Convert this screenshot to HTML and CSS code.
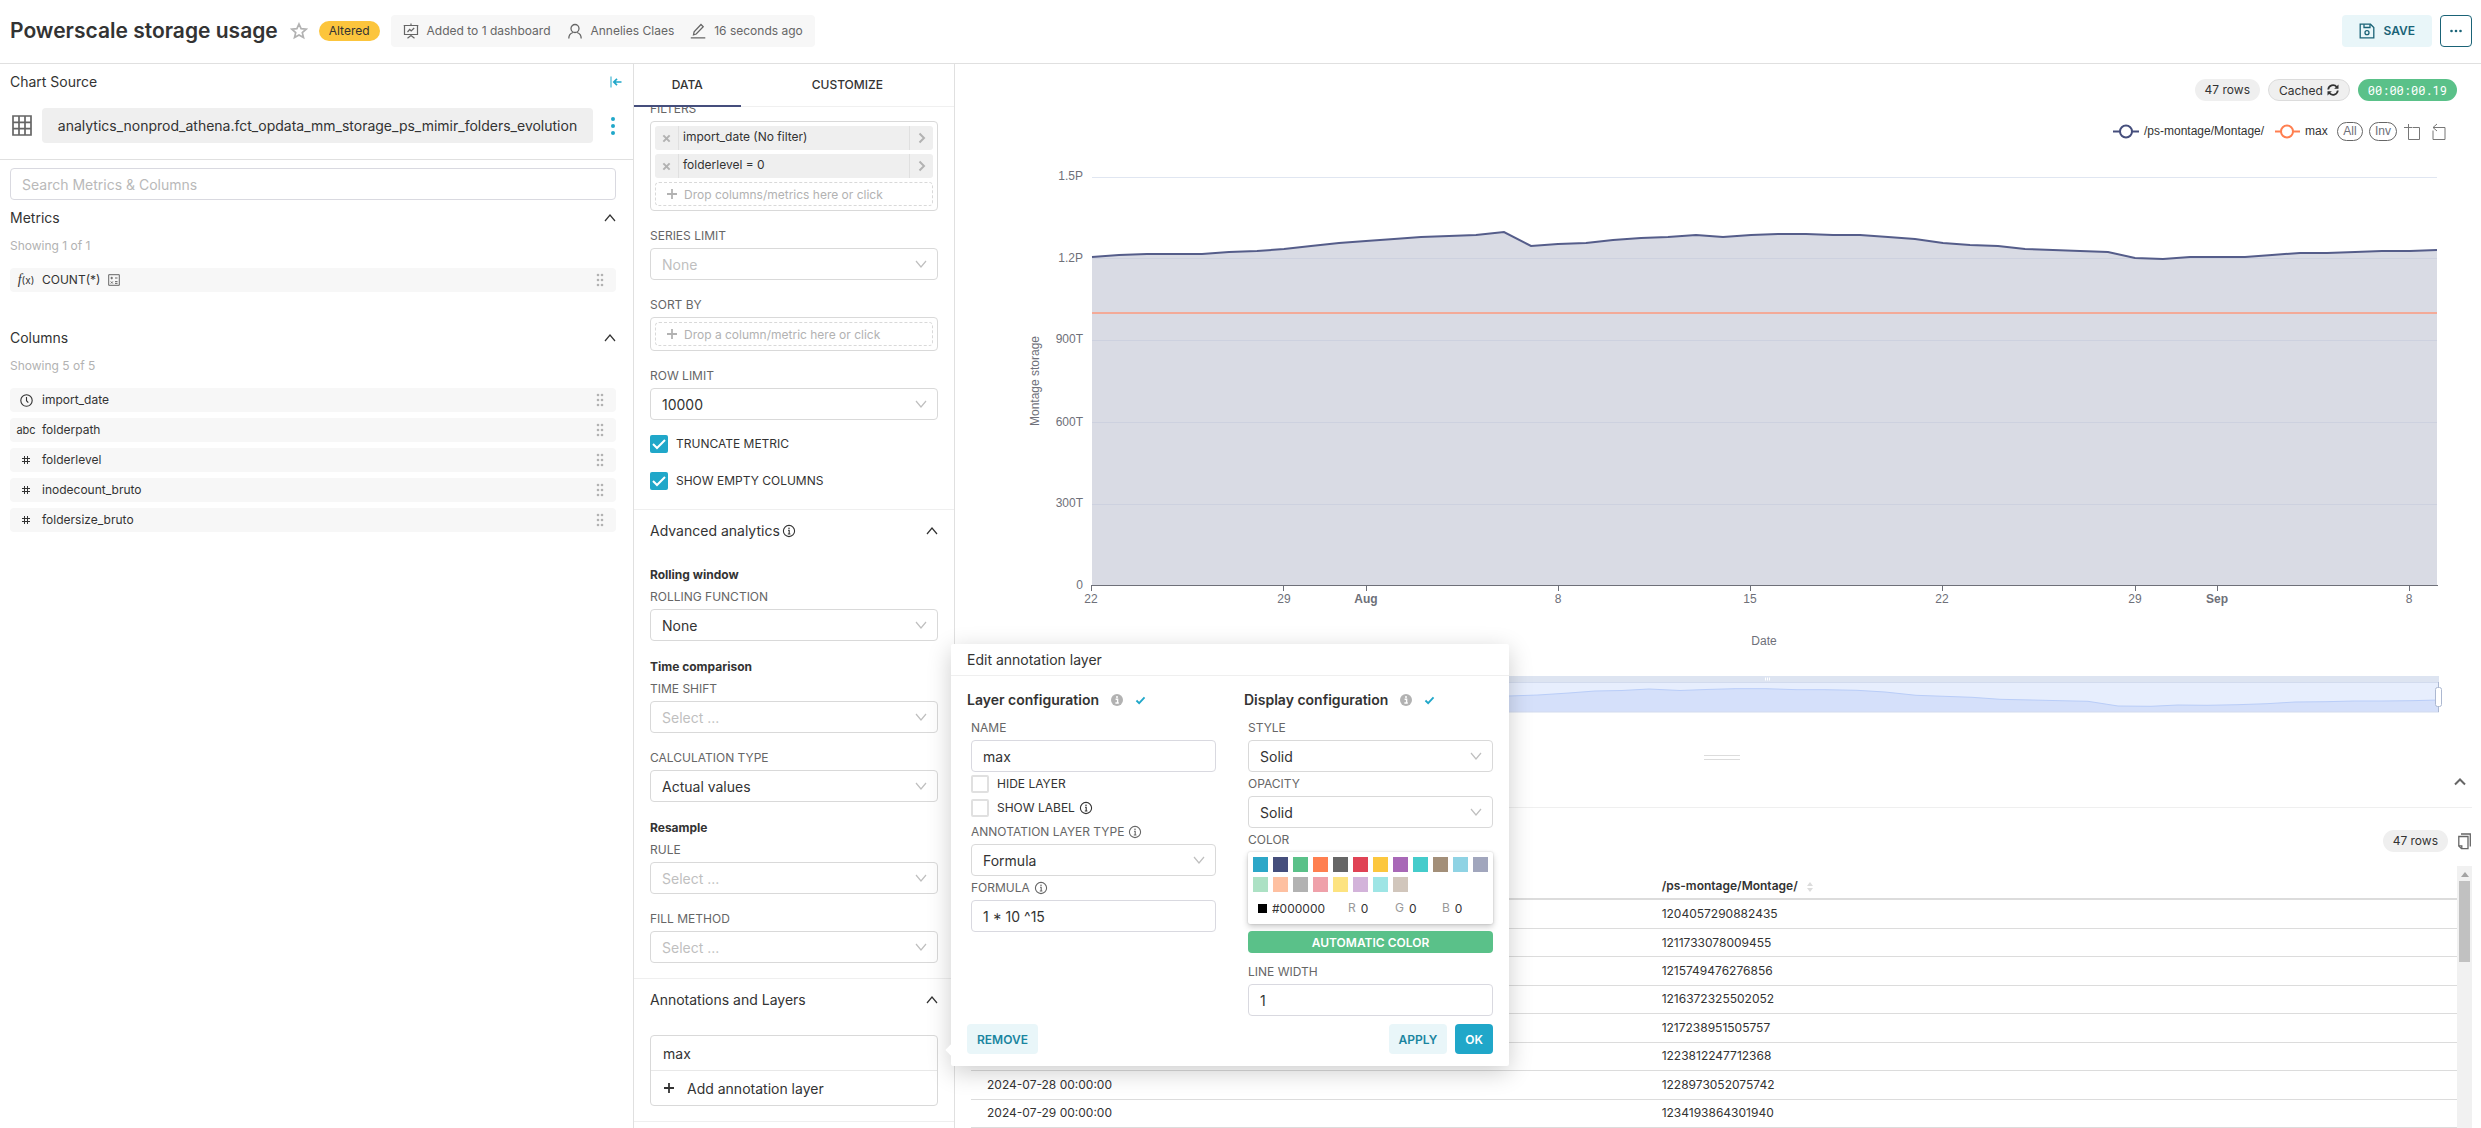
FILE: index.html
```html
<!DOCTYPE html>
<html lang="en">
<head>
    <meta charset="UTF-8">
    <meta name="viewport" content="width=device-width, initial-scale=1.0">
    <title>Powerscale storage usage</title>
    <link rel="stylesheet" href="styles.css">
</head>
<body>
    <!-- shared icons -->
    <svg class="sprite" aria-hidden="true">
        <symbol id="i-up" viewBox="0 0 12 12"><path d="M1 9l5-6 5 6" fill="none" stroke="currentColor" stroke-width="1.2"/></symbol>
        <symbol id="i-grip" viewBox="0 0 8 14"><g fill="currentColor"><circle cx="2" cy="2" r="1.3"/><circle cx="6" cy="2" r="1.3"/><circle cx="2" cy="7" r="1.3"/><circle cx="6" cy="7" r="1.3"/><circle cx="2" cy="12" r="1.3"/><circle cx="6" cy="12" r="1.3"/></g></symbol>
        <symbol id="i-info" viewBox="0 0 14 14"><g fill="none" stroke="currentColor" stroke-width="1.1"><circle cx="7" cy="7" r="5.6"/><path d="M6 6.300h1.200v3.700M5.800 10h2.600"/></g><circle cx="7" cy="4.2" r=".8" fill="currentColor"/></symbol>
        <symbol id="i-info-solid" viewBox="0 0 12 12"><circle cx="6" cy="6" r="6" fill="#b2b2b2"/><path d="M4.6 5.2h2v3.6M4.4 9h3.4" fill="none" stroke="#fff" stroke-width="1.4"/><circle cx="6" cy="2.9" r="1" fill="#fff"/></symbol>
        <symbol id="i-check" viewBox="0 0 12 10"><path d="M1.5 5l3 3 6-6.500" fill="none" stroke="#20a7c9" stroke-width="2"/></symbol>
        <symbol id="i-x" viewBox="0 0 10 10"><path d="M1.500 1.500l7 7m0-7l-7 7" fill="none" stroke="currentColor" stroke-width="2.200"/></symbol>
        <symbol id="i-right" viewBox="0 0 8 12"><path d="M1.500 1.500L6 6l-4.500 4.500" fill="none" stroke="currentColor" stroke-width="2"/></symbol>
        <symbol id="i-plus" viewBox="0 0 12 12"><path d="M6 1v10M1 6h10" fill="none" stroke="currentColor" stroke-width="1.800"/></symbol>
        <symbol id="i-hash" viewBox="0 0 10 10"><path d="M3.500 1v8M6.500 1v8M1 3.500h8M1 6.500h8" fill="none" stroke="currentColor" stroke-width="1"/></symbol>
    </svg>

    <header class="topbar">
        <h1>Powerscale storage usage</h1>
        <svg class="star" viewBox="0 0 18 18"><path d="M9 2l2.100 4.700 5.100.5-3.900 3.400 1.200 5L9 12.900l-4.500 2.700 1.200-5L1.800 7.200l5.100-.5z" fill="none" stroke="#b2b2b2" stroke-width="1.700"/></svg>
        <span class="badge">Altered</span>
        <ul class="meta">
            <li>
                <svg width="16" height="16" viewBox="0 0 16 16"><g fill="none" stroke="currentColor" stroke-width="1.200"><path d="M.7 2.500h14.600M1.500 2.500v9h13v-9M8 .5v2M4.500 15.200L8 12.500l3.500 2.700M8 11.500v2M4.500 9l2.200-2.500 1.500 1.500 3-3"/></g></svg>
                Added to 1 dashboard
            </li>
            <li>
                <svg width="16" height="16" viewBox="0 0 16 16"><g fill="none" stroke="currentColor" stroke-width="1.300"><circle cx="8" cy="5.500" r="4"/><path d="M1.800 15.500c0-3.500 2.500-5.500 4.200-6M14.200 15.500c0-3.500-2.500-5.500-4.200-6"/></g></svg>
                Annelies Claes
            </li>
            <li>
                <svg width="16" height="16" viewBox="0 0 16 16"><g fill="none" stroke="currentColor" stroke-width="1.300"><path d="M.8 14.800h14.500M3.500 11.800l.6-3L11 1.500l2.200 2.200-7 7.300z"/></g></svg>
                16 seconds ago
            </li>
        </ul>
        <div class="actions">
            <button class="btn btn-save" type="button">
                <svg width="16" height="16" viewBox="0 0 16 16"><g fill="none" stroke="currentColor" stroke-width="1.300"><path d="M1.200 1.200h10.300l3.300 3.300v10.300H1.200z"/><path d="M5 1.200v3.300h6V1.200"/><circle cx="8" cy="9.700" r="2"/></g></svg>
                SAVE
            </button>
            <button class="btn-more" type="button" aria-label="More">
                <svg width="12" height="4" viewBox="0 0 12 4"><g fill="currentColor"><circle cx="1.500" cy="2" r="1.300"/><circle cx="6" cy="2" r="1.300"/><circle cx="10.500" cy="2" r="1.300"/></g></svg>
            </button>
        </div>
    </header>

    <main class="explore">
        <aside class="source">
            <div class="source-head">
                <h2>Chart Source</h2>
                <button class="icon-btn teal" type="button" aria-label="Collapse">
                    <svg width="12" height="12" viewBox="0 0 12 12"><g fill="none" stroke="currentColor"><path d="M1 .5v11" stroke-width="1"/><path d="M11.500 6H4M7 2.800L3.800 6 7 9.200" stroke-width="1.700"/></g></svg>
                </button>
            </div>
            <div class="dataset">
                <svg width="20" height="21" viewBox="0 0 20 21"><path d="M1 1h18v19H1zM1 7.300h18M1 13.600h18M7 1v19M13 1v19" fill="none" stroke="#666" stroke-width="1.700"/></svg>
                <span class="dataset-name">analytics_nonprod_athena.fct_opdata_mm_storage_ps_mimir_folders_evolution</span>
                <button class="icon-btn teal" type="button" aria-label="Dataset menu">
                    <svg width="4" height="20" viewBox="0 0 4 20"><g fill="currentColor"><circle cx="2" cy="3" r="2"/><circle cx="2" cy="10" r="2"/><circle cx="2" cy="17" r="2"/></g></svg>
                </button>
            </div>
            <div class="fields">
                <input class="text-input search" type="text" placeholder="Search Metrics &amp; Columns" aria-label="Search Metrics &amp; Columns">
                <section class="group">
                    <h3>Metrics <svg width="12" height="12"><use href="#i-up"/></svg></h3>
                    <p>Showing 1 of 1</p>
                    <ul>
                        <li><span class="type fx"><i>f</i>(x)</span>COUNT(*)
                            <svg class="calc" width="12" height="12" viewBox="0 0 12 12"><path d="M.7.700h10.600v10.600H.7zM2.500 4h2.500M3.700 2.800v2.500M7 4h2.500M2.800 7.500l2 2m0-2l-2 2M7 7.600h2.500M7 9.400h2.500" fill="none" stroke="#666" stroke-width="1"/></svg>
                            <svg class="grip" width="8" height="14"><use href="#i-grip"/></svg></li>
                    </ul>
                </section>
                <section class="group">
                    <h3>Columns <svg width="12" height="12"><use href="#i-up"/></svg></h3>
                    <p>Showing 5 of 5</p>
                    <ul>
                        <li><span class="type"><svg width="13" height="13" viewBox="0 0 13 13"><g fill="none" stroke="currentColor" stroke-width="1.100"><circle cx="6.500" cy="6.500" r="5.700"/><path d="M6.500 3v3.700l1.800 2"/></g></svg></span>import_date<svg class="grip" width="8" height="14"><use href="#i-grip"/></svg></li>
                        <li><span class="type">abc</span>folderpath<svg class="grip" width="8" height="14"><use href="#i-grip"/></svg></li>
                        <li><span class="type"><svg width="10" height="10"><use href="#i-hash"/></svg></span>folderlevel<svg class="grip" width="8" height="14"><use href="#i-grip"/></svg></li>
                        <li><span class="type"><svg width="10" height="10"><use href="#i-hash"/></svg></span>inodecount_bruto<svg class="grip" width="8" height="14"><use href="#i-grip"/></svg></li>
                        <li><span class="type"><svg width="10" height="10"><use href="#i-hash"/></svg></span>foldersize_bruto<svg class="grip" width="8" height="14"><use href="#i-grip"/></svg></li>
                    </ul>
                </section>
            </div>
        </aside>

        <section class="controls">
            <nav class="tabs">
                <button class="tab active" type="button">DATA</button>
                <button class="tab" type="button">CUSTOMIZE</button>
            </nav>
            <div class="controls-scroll">
                <div class="panel query">
                    <div class="field">
                        <span class="label">FILTERS</span>
                        <div class="drop-box">
                            <div class="filter">
                                <button type="button" aria-label="Remove"><svg width="9" height="9"><use href="#i-x"/></svg></button>
                                <span>import_date (No filter)</span>
                                <button type="button" aria-label="Edit"><svg width="8" height="12"><use href="#i-right"/></svg></button>
                            </div>
                            <div class="filter">
                                <button type="button" aria-label="Remove"><svg width="9" height="9"><use href="#i-x"/></svg></button>
                                <span>folderlevel = 0</span>
                                <button type="button" aria-label="Edit"><svg width="8" height="12"><use href="#i-right"/></svg></button>
                            </div>
                            <button class="drop" type="button"><svg width="12" height="12"><use href="#i-plus"/></svg>Drop columns/metrics here or click</button>
                        </div>
                    </div>
                    <div class="field">
                        <label class="label" for="seriesLimit">SERIES LIMIT</label>
                        <select class="select empty" id="seriesLimit"><option>None</option></select>
                    </div>
                    <div class="field">
                        <span class="label">SORT BY</span>
                        <div class="drop-box">
                            <button class="drop" type="button"><svg width="12" height="12"><use href="#i-plus"/></svg>Drop a column/metric here or click</button>
                        </div>
                    </div>
                    <div class="field">
                        <label class="label" for="rowLimit">ROW LIMIT</label>
                        <select class="select" id="rowLimit"><option>10000</option></select>
                    </div>
                    <label class="check"><input type="checkbox" checked>TRUNCATE METRIC</label>
                    <label class="check"><input type="checkbox" checked>SHOW EMPTY COLUMNS</label>
                </div>

                <div class="panel">
                    <h3>Advanced analytics<svg width="14" height="14"><use href="#i-info"/></svg><svg class="fold" width="12" height="12"><use href="#i-up"/></svg></h3>
                    <h4>Rolling window</h4>
                    <div class="field">
                        <label class="label" for="rolling">ROLLING FUNCTION</label>
                        <select class="select" id="rolling"><option>None</option></select>
                    </div>
                    <h4>Time comparison</h4>
                    <div class="field">
                        <label class="label" for="shift">TIME SHIFT</label>
                        <select class="select empty" id="shift"><option>Select ...</option></select>
                    </div>
                    <div class="field">
                        <label class="label" for="calcType">CALCULATION TYPE</label>
                        <select class="select" id="calcType"><option>Actual values</option></select>
                    </div>
                    <h4>Resample</h4>
                    <div class="field">
                        <label class="label" for="rule">RULE</label>
                        <select class="select empty" id="rule"><option>Select ...</option></select>
                    </div>
                    <div class="field">
                        <label class="label" for="fill">FILL METHOD</label>
                        <select class="select empty" id="fill"><option>Select ...</option></select>
                    </div>
                </div>

                <div class="panel">
                    <h3>Annotations and Layers<svg class="fold" width="12" height="12"><use href="#i-up"/></svg></h3>
                    <div class="layers">
                        <button type="button">max</button>
                        <button type="button"><svg width="12" height="12"><use href="#i-plus"/></svg>Add annotation layer</button>
                    </div>
                </div>
                <div class="panel"></div>
            </div>
        </section>

        <section class="chart-pane">
            <div class="pills">
                <span class="pill">47 rows</span>
                <button class="pill cached" type="button">Cached
                    <svg width="12" height="12" viewBox="0 0 12 12"><g fill="none" stroke="currentColor" stroke-width="1.800"><path d="M1.200 5.500A4.800 4.800 0 0 1 9.700 3M10.800 6.500A4.800 4.800 0 0 1 2.300 9"/></g><path d="M11.500.5v4.300H7.200zM.5 11.500V7.200h4.300z" fill="currentColor"/></svg>
                </button>
                <span class="pill timer">00:00:00.19</span>
            </div>

            <svg class="chart" viewBox="955 110 1526 610" role="img" aria-label="Montage storage by date">
                <!-- legend -->
                <g stroke-width="2" fill="#fff">
                    <path d="M2113 131.500h26" stroke="#454e7c"/><circle cx="2126" cy="131.500" r="6" stroke="#454e7c"/>
                    <path d="M2275 131.500h25" stroke="#ff7f50"/><circle cx="2287" cy="131.500" r="6" stroke="#ff7f50"/>
                </g>
                <g class="legend-text"><text x="2144" y="135">/ps-montage/Montage/</text><text x="2305" y="135">max</text></g>
                <g fill="none" stroke="#666"><rect x="2337.500" y="122.500" width="25" height="18" rx="9"/><rect x="2369.500" y="122.500" width="27" height="18" rx="9"/></g>
                <g class="axis-text middle"><text x="2350" y="135">All</text><text x="2383" y="135">Inv</text></g>
                <g fill="none" stroke="#777"><path d="M2404 127.500h8M2408.500 124v15.500h11v-12h-7"/><path d="M2436 127.500h9v12h-12v-9M2437 124l-4 3.500 4 3.500M2433 127.500h3"/></g>

                <!-- plot -->
                <path d="M1092 177.500h1345" stroke="#e0e6f1"/>
                <path class="area" d="M1092 257L1119 255 1147 254 1174 254 1202 254 1229 252 1257 251 1284 249 1311 246 1339 243 1366 241 1394 239 1421 237 1449 236 1476 235 1504 232 1531 246 1558 244 1586 243 1613 240 1641 238 1668 237 1696 235 1723 237 1751 235 1778 234 1806 234 1833 235 1860 235 1888 237 1915 239 1943 243 1970 245 1998 246 2025 249 2053 250 2080 251 2108 252 2135 258 2163 259 2190 257 2217 257 2245 257 2272 255 2300 253 2327 253 2355 252 2382 251 2410 251 2437 250V585H1092z"/>
                <path d="M1092 258.500h1345M1092 340.500h1345M1092 422.500h1345M1092 504.500h1345" stroke="#cdd1df"/>
                <path d="M1092 313h1345" stroke="#f3aa98" stroke-width="2"/>
                <path class="line" d="M1092 257L1119 255 1147 254 1174 254 1202 254 1229 252 1257 251 1284 249 1311 246 1339 243 1366 241 1394 239 1421 237 1449 236 1476 235 1504 232 1531 246 1558 244 1586 243 1613 240 1641 238 1668 237 1696 235 1723 237 1751 235 1778 234 1806 234 1833 235 1860 235 1888 237 1915 239 1943 243 1970 245 1998 246 2025 249 2053 250 2080 251 2108 252 2135 258 2163 259 2190 257 2217 257 2245 257 2272 255 2300 253 2327 253 2355 252 2382 251 2410 251 2437 250"/>
                <path d="M1091 585.500h1347M1091.500 585v6M1283.500 585v6M1366.500 585v6M1558.500 585v6M1750.500 585v6M1942.500 585v6M2135.500 585v6M2217.500 585v6M2409.500 585v6" stroke="#6e7079"/>
                <g class="axis-text end">
                    <text x="1083" y="180">1.5P</text><text x="1083" y="262">1.2P</text><text x="1083" y="343">900T</text><text x="1083" y="426">600T</text><text x="1083" y="507">300T</text><text x="1083" y="589">0</text>
                </g>
                <g class="axis-text middle">
                    <text x="1091" y="603">22</text><text x="1284" y="603">29</text><text class="month" x="1366" y="603">Aug</text><text x="1558" y="603">8</text><text x="1750" y="603">15</text><text x="1942" y="603">22</text><text x="2135" y="603">29</text><text class="month" x="2217" y="603">Sep</text><text x="2409" y="603">8</text>
                    <text x="1764" y="645">Date</text>
                    <text transform="translate(1039 381) rotate(-90)">Montage storage</text>
                </g>

                <!-- range slider -->
                <path d="M1089 683h1350v29H1089z" fill="#e7eefd"/>
                <path d="M1089 676h1350v7H1089z" fill="#dde4f1"/>
                <path d="M1089 712V706L1300 700 1509 696 1538 695 1569 693 1595 691 1622 690.500 1649 689 1680 690.500 1706 689.500 1735 688.700 1766 688.700 1797 689.700 1825 689.700 1857 690.300 1885 692 1916 695.300 1944 696.300 1972 697.300 2000 699.300 2032 700 2060 700.700 2088 701.300 2118 706 2151 706.300 2178 705 2207 705.300 2238 704.700 2267 703.700 2295 702 2326 701.700 2354 701 2382 701 2411 700.700 2439 700V712z" fill="#d5e0fa"/>
                <path d="M1089 706L1300 700 1509 696 1538 695 1569 693 1595 691 1622 690.500 1649 689 1680 690.500 1706 689.500 1735 688.700 1766 688.700 1797 689.700 1825 689.700 1857 690.300 1885 692 1916 695.300 1944 696.300 1972 697.300 2000 699.300 2032 700 2060 700.700 2088 701.300 2118 706 2151 706.300 2178 705 2207 705.300 2238 704.700 2267 703.700 2295 702 2326 701.700 2354 701 2382 701 2411 700.700 2439 700" fill="none" stroke="#b9cdf8"/>
                <path d="M1089 682.500h1350M1089 712h1350" stroke="#d2dbee"/>
                <path d="M1765.500 677.500v3M1767.500 677.500v3M1769.500 677.500v3" stroke="#fff"/>
                <path d="M2438.500 682v30" stroke="#acb8d1"/>
                <rect x="2435.500" y="687.500" width="6" height="19" rx="2" fill="#fff" stroke="#acb8d1"/>
            </svg>

            <div class="gutter"></div>
            <div class="results-bar">
                <button class="icon-btn" type="button" aria-label="Collapse results"><svg width="12" height="10" viewBox="0 0 12 10"><path d="M1 7.500l5-5 5 5" fill="none" stroke="#666" stroke-width="2"/></svg></button>
            </div>
            <div class="results-tools">
                <span class="pill">47 rows</span>
                <button class="icon-btn" type="button" aria-label="Copy"><svg width="13" height="17" viewBox="0 0 13 17"><g fill="none" stroke="#666" stroke-width="1.300"><path d="M.8 3.500h9.200v12.200H3.500L.8 13z"/><path d="M3 1h9.300v12.500M.8 12.800h3v3"/></g></svg></button>
            </div>
            <div class="results">
                <table>
                    <thead>
                        <tr><th>import_date</th><th>/ps-montage/Montage/ <svg width="6" height="10" viewBox="0 0 6 10"><path d="M3 0l3 4H0zM3 10L0 6h6z" fill="#dcdcdc"/></svg></th></tr>
                    </thead>
                    <tbody>
                        <tr><td>2024-07-22 00:00:00</td><td>1204057290882435</td></tr>
                        <tr><td>2024-07-23 00:00:00</td><td>1211733078009455</td></tr>
                        <tr><td>2024-07-24 00:00:00</td><td>1215749476276856</td></tr>
                        <tr><td>2024-07-25 00:00:00</td><td>1216372325502052</td></tr>
                        <tr><td>2024-07-26 00:00:00</td><td>1217238951505757</td></tr>
                        <tr><td>2024-07-27 00:00:00</td><td>1223812247712368</td></tr>
                        <tr><td>2024-07-28 00:00:00</td><td>1228973052075742</td></tr>
                        <tr><td>2024-07-29 00:00:00</td><td>1234193864301940</td></tr>
                    </tbody>
                </table>
                <div class="scrollbar">
                    <svg width="8" height="5" viewBox="0 0 8 5"><path d="M4 0l4 5H0z" fill="#a3a3a3"/></svg>
                    <div class="thumb"></div>
                </div>
            </div>
        </section>
    </main>

    <form class="popover">
        <h2>Edit annotation layer</h2>
        <div class="popover-body">
            <div class="config">
                <h3>Layer configuration <svg width="12" height="12"><use href="#i-info-solid"/></svg><svg width="11" height="9"><use href="#i-check"/></svg></h3>
                <div class="config-fields">
                    <label class="label" for="layerName">NAME</label>
                    <input class="text-input" id="layerName" type="text" value="max">
                    <label class="check"><input type="checkbox">HIDE LAYER</label>
                    <label class="check"><input type="checkbox">SHOW LABEL <svg width="14" height="14"><use href="#i-info"/></svg></label>
                    <label class="label" for="layerType">ANNOTATION LAYER TYPE <svg width="14" height="14"><use href="#i-info"/></svg></label>
                    <select class="select" id="layerType"><option>Formula</option></select>
                    <label class="label" for="formula">FORMULA <svg width="14" height="14"><use href="#i-info"/></svg></label>
                    <input class="text-input" id="formula" type="text" value="1 * 10 ^15">
                </div>
            </div>
            <div class="config">
                <h3>Display configuration <svg width="12" height="12"><use href="#i-info-solid"/></svg><svg width="11" height="9"><use href="#i-check"/></svg></h3>
                <div class="config-fields">
                    <label class="label" for="style">STYLE</label>
                    <select class="select" id="style"><option>Solid</option></select>
                    <label class="label" for="opacity">OPACITY</label>
                    <select class="select" id="opacity"><option>Solid</option></select>
                    <span class="label">COLOR</span>
                    <div class="picker">
                        <div class="swatches">
                            <i class="c1"></i><i class="c2"></i><i class="c3"></i><i class="c4"></i><i class="c5"></i><i class="c6"></i><i class="c7"></i><i class="c8"></i><i class="c9"></i><i class="c10"></i><i class="c11"></i><i class="c12"></i><i class="c13"></i><i class="c14"></i><i class="c15"></i><i class="c16"></i><i class="c17"></i><i class="c18"></i><i class="c19"></i><i class="c20"></i>
                        </div>
                        <div class="rgb">
                            <i class="current"></i>
                            <input class="hex" type="text" value="#000000" aria-label="Hex">
                            <label>R<input type="text" value="0"></label>
                            <label>G<input type="text" value="0"></label>
                            <label>B<input type="text" value="0"></label>
                        </div>
                    </div>
                    <button class="auto-color" type="button">AUTOMATIC COLOR</button>
                    <label class="label" for="lineWidth">LINE WIDTH</label>
                    <input class="text-input" id="lineWidth" type="text" value="1">
                </div>
            </div>
        </div>
        <div class="popover-foot">
            <button class="btn" type="button">REMOVE</button>
            <button class="btn apply" type="button">APPLY</button>
            <button class="btn primary" type="button">OK</button>
        </div>
    </form>
</body>
</html>
```
FILE: styles.css
```css
* {
    box-sizing: border-box;
}
body {
    margin: 0;
    height: 100vh;
    overflow: hidden;
    display: flex;
    flex-direction: column;
    position: relative;
    font-family: Inter, "Liberation Sans", sans-serif;
    font-size: 12px;
    line-height: 16px;
    color: #333;
    background-color: #fff;
}
h1, h2, h3, h4, p, ul {
    margin: 0;
    padding: 0;
    font-weight: 400;
}
ul {
    list-style: none;
}
button, input, select {
    font-family: inherit;
    color: inherit;
}
button {
    border: none;
    background: none;
    padding: 0;
    cursor: pointer;
}
svg {
    flex-shrink: 0;
}
.sprite {
    position: absolute;
    width: 0;
    height: 0;
}
.icon-btn {
    display: flex;
    align-items: center;
}
.teal {
    color: #20a7c9;
}

/* header */
.topbar {
    display: flex;
    align-items: center;
    height: 64px;
    flex-shrink: 0;
    padding: 0 9px 2px 10px;
    border-bottom: 1px solid #e0e0e0;
}
.topbar h1 {
    font-size: 21px;
    font-weight: 600;
    line-height: 28px;
}
.star {
    width: 18px;
    height: 18px;
    margin-left: 12px;
}
.badge {
    margin-left: 11px;
    padding: 0 10px;
    border-radius: 10px;
    line-height: 20px;
    background-color: #fcc53c;
}
.meta {
    display: flex;
    gap: 16px;
    margin-left: 11px;
    padding: 8px 12px;
    border-radius: 4px;
    color: #666;
    background-color: #f7f7f7;
}
.meta li {
    display: flex;
    gap: 8px;
}
.actions {
    display: flex;
    gap: 8px;
    margin-left: auto;
}
.btn {
    height: 30px;
    padding: 0 10px;
    border-radius: 4px;
    font-size: 12px;
    font-weight: 600;
    color: #1a85a0;
    background-color: #e9f6f9;
}
.btn-save {
    display: flex;
    align-items: center;
    gap: 8px;
    height: 32px;
    padding: 0 17px;
    color: #1a6377;
}
.btn-more {
    display: flex;
    align-items: center;
    justify-content: center;
    width: 32px;
    height: 32px;
    border: 1px solid #1a6377;
    border-radius: 4px;
    color: #1a6377;
}

.explore {
    display: flex;
    flex: 1;
    min-height: 0;
}

/* data source */
.source {
    width: 634px;
    flex-shrink: 0;
    border-right: 1px solid #e0e0e0;
}
.source-head {
    display: flex;
    align-items: center;
    justify-content: space-between;
    padding: 8px 11px 0 10px;
}
.source-head h2 {
    font-size: 14px;
    line-height: 20px;
}
.dataset {
    display: flex;
    align-items: center;
    gap: 10px;
    padding: 16px 18px 16px 12px;
    border-bottom: 1px solid #e0e0e0;
}
.dataset-name {
    flex: 1;
    min-width: 0;
    margin-right: 8px;
    line-height: 35px;
    border-radius: 4px;
    font-size: 14px;
    text-align: center;
    background-color: #efefef;
}
.fields {
    padding: 8px 17px 0 10px;
}
.text-input {
    display: block;
    width: 100%;
    height: 32px;
    padding: 0 11px;
    border: 1px solid #d9d9e0;
    border-radius: 4px;
    font-size: 14px;
    background-color: #fff;
}
.text-input::placeholder {
    color: #b9b9b9;
}
.group {
    padding-bottom: 28px;
}
.group h3 {
    display: flex;
    align-items: center;
    justify-content: space-between;
    font-size: 14px;
    line-height: 36px;
}
.group p {
    line-height: 20px;
    color: #b2b2b2;
}
.group ul {
    display: flex;
    flex-direction: column;
    gap: 6px;
    padding-top: 12px;
}
.group li {
    display: flex;
    align-items: center;
    height: 24px;
    padding-right: 12px;
    border-radius: 4px;
    background-color: #f7f7f7;
}
.type {
    display: flex;
    align-items: center;
    justify-content: center;
    width: 32px;
    font-size: 11px;
}
.fx {
    font-size: 10px;
}
.fx i {
    font-family: "Liberation Serif", serif;
    font-size: 14px;
}
.calc {
    margin-left: 8px;
}
.grip {
    margin-left: auto;
    color: #b2b2b2;
}

/* control panel */
.controls {
    display: flex;
    flex-direction: column;
    width: 321px;
    flex-shrink: 0;
    border-right: 1px solid #e0e0e0;
}
.tabs {
    display: flex;
    flex-shrink: 0;
    height: 43px;
    border-bottom: 1px solid #f0f0f0;
}
.tab {
    flex: 2;
    font-size: 12px;
    font-weight: 500;
    margin-bottom: -1px;
    border-bottom: 2px solid transparent;
}
.tab.active {
    flex: 1;
    border-bottom-color: #454e7c;
}
.controls-scroll {
    flex: 1;
    overflow: hidden;
}
.panel {
    padding: 0 16px 15px;
    border-bottom: 1px solid #efefef;
}
.panel.query {
    margin-top: -6px;
    padding-bottom: 19px;
}
.panel h3 {
    display: flex;
    align-items: center;
    gap: 2px;
    padding: 10px 0 24px;
    font-size: 14px;
    line-height: 22px;
}
.fold {
    margin-left: auto;
}
.panel h4 {
    margin: 18px 0 6px;
    font-weight: 700;
}
.panel h3 + h4 {
    margin-top: 1px;
}
.field + .field {
    margin-top: 17px;
}
.label {
    display: flex;
    align-items: center;
    gap: 4px;
    height: 16px;
    margin-bottom: 4px;
    color: #666;
}
.select {
    display: block;
    width: 100%;
    height: 32px;
    padding: 0 11px;
    border: 1px solid #d9d9d9;
    border-radius: 4px;
    font-size: 14px;
    appearance: none;
    background: #fff url("data:image/svg+xml,%3Csvg xmlns='http://www.w3.org/2000/svg' width='12' height='8'%3E%3Cpath d='M1 1l5 6 5-6' fill='none' stroke='%23bfbfbf' stroke-width='1.200'/%3E%3C/svg%3E") no-repeat right 10px center;
}
.select.empty {
    color: #bfbfbf;
}
.drop-box {
    display: flex;
    flex-direction: column;
    gap: 4px;
    padding: 4px;
    border: 1px solid #d9d9d9;
    border-radius: 4px;
}
.filter {
    display: flex;
    height: 24px;
    border-radius: 3px;
    background-color: #efefef;
}
.filter span {
    flex: 1;
    padding: 3px 4px;
}
.filter button {
    display: flex;
    align-items: center;
    justify-content: center;
    width: 24px;
    color: #b2b2b2;
    border-right: 1px solid #e0e0e0;
}
.filter button:last-child {
    border-right: none;
    border-left: 1px solid #e0e0e0;
}
.drop {
    display: flex;
    align-items: center;
    gap: 6px;
    height: 24px;
    padding: 0 10px;
    border: 1px dashed #d9d9d9;
    border-radius: 4px;
    font-size: 12px;
    color: #b2b2b2;
}
.check {
    display: flex;
    align-items: center;
    gap: 4px;
}
.check input {
    width: 18px;
    height: 18px;
    margin: 0 4px 0 0;
    border: 2px solid #e0e0e0;
    border-radius: 2px;
    appearance: none;
    background-color: #fff;
}
.check input:checked {
    border: none;
    background: #20a7c9 url("data:image/svg+xml,%3Csvg xmlns='http://www.w3.org/2000/svg' width='14' height='12'%3E%3Cpath d='M1 6l4 4 8-8' fill='none' stroke='white' stroke-width='2'/%3E%3C/svg%3E") no-repeat center;
}
.query .check {
    margin-top: 15px;
}
.query .check + .check {
    margin-top: 19px;
}
.layers {
    border: 1px solid #d9d9d9;
    border-radius: 4px;
}
.layers button {
    display: flex;
    align-items: center;
    gap: 12px;
    width: 100%;
    height: 34px;
    padding: 0 12px;
    font-size: 14px;
}
.layers button + button {
    height: 35px;
    border-top: 1px solid #e8e8e8;
}

/* chart */
.chart-pane {
    flex: 1;
    min-width: 0;
    display: flex;
    flex-direction: column;
}
.pills {
    display: flex;
    justify-content: flex-end;
    gap: 8px;
    padding: 15px 24px 9px;
}
.pill {
    display: flex;
    align-items: center;
    gap: 4px;
    height: 22px;
    padding: 0 10px;
    border-radius: 11px;
    font-size: 12px;
    background-color: #efefef;
}
.cached {
    border: 1px solid #dcdcdc;
}
.timer {
    font-family: "Roboto Mono", "DejaVu Sans Mono", monospace;
    color: #fff;
    background-color: #5ac189;
}
.chart {
    display: block;
    width: 100%;
    font-family: "Liberation Sans", sans-serif;
    font-size: 12px;
}
.legend-text {
    fill: #333;
}
.axis-text {
    fill: #6e7079;
}
.middle {
    text-anchor: middle;
}
.end {
    text-anchor: end;
}
.month {
    font-weight: 700;
}
.area {
    fill: #d9dbe4;
}
.line {
    fill: none;
    stroke: #555d8a;
    stroke-width: 2;
}
.gutter {
    align-self: center;
    width: 36px;
    height: 5px;
    flex-shrink: 0;
    margin: 35px 0 0 8px;
    border: solid #dcdcdc;
    border-width: 1px 0;
}
.results-bar {
    display: flex;
    justify-content: flex-end;
    margin-right: 9px;
    padding: 17px 6px 20px;
    border-bottom: 1px solid #efefef;
}
.results-tools {
    display: flex;
    justify-content: flex-end;
    gap: 10px;
    padding: 22px 10px 14px;
}
.results {
    display: flex;
    flex: 1;
    min-height: 0;
    overflow: hidden;
    margin: 0 9px 0 16px;
}
.results table {
    flex: 1;
    height: 262px;
    border-collapse: collapse;
    table-layout: fixed;
}
.results th, .results td {
    padding: 0 16px;
    text-align: left;
    border-bottom: 1px solid #dcdcdc;
}
.results th {
    height: 33px;
    padding-top: 8px;
    font-weight: 600;
    border-bottom-width: 2px;
}
.results th:first-child {
    width: 45.4%;
}
.results th svg {
    margin-left: 6px;
    vertical-align: middle;
}
.scrollbar {
    display: flex;
    flex-direction: column;
    align-items: center;
    gap: 4px;
    width: 15px;
    padding-top: 6px;
    background-color: #f1f1f1;
}
.thumb {
    width: 11px;
    height: 81px;
    background-color: #c1c1c1;
}

/* annotation popover */
.popover {
    position: absolute;
    left: 951px;
    top: 644px;
    width: 558px;
    padding-bottom: 12px;
    background-color: #fff;
    border-radius: 2px;
    box-shadow: 0 6px 24px rgba(0,0,0,0.2);
}
.popover::before {
    content: "";
    position: absolute;
    left: -4px;
    bottom: 12px;
    width: 8px;
    height: 8px;
    background-color: #fff;
    transform: rotate(45deg);
}
.popover h2 {
    padding: 0 16px;
    font-size: 14px;
    line-height: 31px;
    border-bottom: 1px solid #efefef;
}
.popover-body {
    display: grid;
    grid-template-columns: 1fr 1fr;
    gap: 28px;
    padding: 12px 16px 8px;
}
.config h3 {
    display: flex;
    align-items: center;
    gap: 12px;
    font-size: 14px;
    font-weight: 600;
    line-height: 24px;
}
.config-fields {
    padding: 4px 0 0 4px;
}
.config .label {
    margin: 4px 0;
}
.config .check {
    height: 24px;
}
.picker {
    padding: 5px 0 8px 5px;
    background-color: #fff;
    border-radius: 2px;
    box-shadow: 0 0 2px rgba(0,0,0,0.2), 0 3px 6px rgba(0,0,0,0.2);
}
.swatches {
    display: flex;
    flex-wrap: wrap;
    gap: 5px;
}
.swatches i {
    width: 15px;
    height: 15px;
}
.c1 { background-color: #2ca7c8; }
.c2 { background-color: #454e7c; }
.c3 { background-color: #5ac189; }
.c4 { background-color: #ff7f50; }
.c5 { background-color: #666; }
.c6 { background-color: #e04355; }
.c7 { background-color: #fcc73e; }
.c8 { background-color: #a868b7; }
.c9 { background-color: #45cccb; }
.c10 { background-color: #a38f79; }
.c11 { background-color: #8fd3e4; }
.c12 { background-color: #a1a6bd; }
.c13 { background-color: #ace1c4; }
.c14 { background-color: #fec0a1; }
.c15 { background-color: #b2b2b2; }
.c16 { background-color: #efa1aa; }
.c17 { background-color: #fde380; }
.c18 { background-color: #d3b3da; }
.c19 { background-color: #9ee5e5; }
.c20 { background-color: #d1c6bc; }
.rgb {
    display: flex;
    align-items: center;
    padding: 8px 0 0 5px;
}
.current {
    width: 9px;
    height: 9px;
    margin-right: 5px;
    background-color: #000;
}
.rgb input {
    width: 33px;
    height: 16px;
    padding: 0;
    border: none;
    font-size: 12px;
    background: none;
}
.rgb .hex {
    width: 76px;
}
.rgb label {
    display: flex;
    gap: 5px;
    width: 47px;
    color: #999;
}
.rgb label input {
    color: #333;
}
.auto-color {
    display: block;
    width: 100%;
    height: 22px;
    margin: 7px 0 11px;
    border-radius: 4px;
    font-size: 12px;
    font-weight: 600;
    color: #fff;
    background-color: #5ac189;
}
.popover-foot {
    display: flex;
    gap: 8px;
    padding: 0 16px;
}
.apply {
    margin-left: auto;
}
.primary {
    color: #fff;
    background-color: #20a7c9;
}
```
